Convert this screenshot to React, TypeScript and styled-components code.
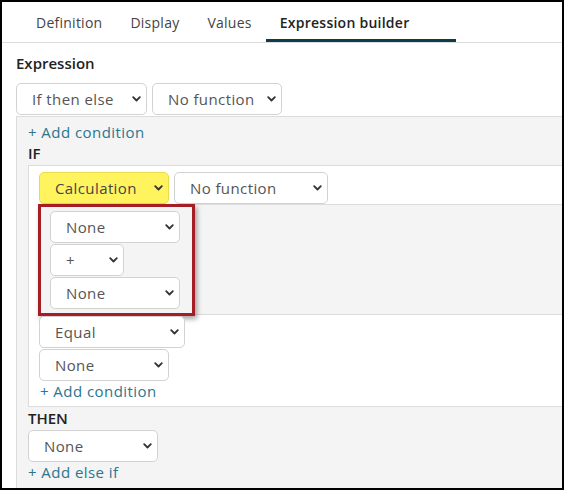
import React from 'react';
import styled, { createGlobalStyle, css } from 'styled-components';

const GlobalStyle = createGlobalStyle`
  *, *::before, *::after { box-sizing: border-box; }
  html, body { margin: 0; padding: 0; background: #fff; }
  body { font-family: "Open Sans", "Liberation Sans", sans-serif; color: #333; }
`;

const Frame = styled.div`
  width: 564px;
  height: 490px;
  border: 2px solid #000;
  overflow: hidden;
  background: #fff;
`;

const Tabs = styled.div`
  display: flex;
  height: 41px;
  padding-left: 20px;
  border-bottom: 1px solid #dcdcdc;
`;

const Tab = styled.div<{ $active?: boolean }>`
  display: flex;
  align-items: center;
  padding: 3px 14px 0;
  font-size: 14px;
  letter-spacing: 0.25px;
  color: #444;
  border-bottom: 3px solid transparent;
  ${(p) =>
    p.$active &&
    css`
      min-width: 190px;
      color: #222;
      font-weight: 600;
      border-bottom-color: #0b3d4f;
    `}
`;

const Body = styled.div`
  padding: 10px 0 0 14px;
`;

const Label = styled.div`
  font-size: 15px;
  font-weight: 600;
  line-height: 20px;
  color: #222;
`;

const Row = styled.div<{ $top?: number }>`
  display: flex;
  gap: 5px;
  margin-top: ${(p) => p.$top ?? 0}px;
`;

const Stack = styled.div<{ $top?: number }>`
  display: flex;
  flex-direction: column;
  align-items: flex-start;
  gap: 1px;
  margin-top: ${(p) => p.$top ?? 0}px;
`;

const Panel = styled.div<{ $tone: 'gray' | 'white' }>`
  border: 1px solid #dcdcdc;
  border-right: none;
  background: ${(p) => (p.$tone === 'gray' ? '#f4f4f4' : '#fff')};
`;

const ExprPanel = styled(Panel)`
  margin-top: 1px;
  padding: 5px 0 0 11px;
  height: 400px;
`;

const ConditionPanel = styled(Panel)`
  margin-top: 2px;
  padding: 6px 0 5px 10px;
`;

const CalcPanel = styled(Panel)`
  position: relative;
  padding: 6px 0 5px 10px;

  /* red highlight frame around the calculation operands */
  &::after {
    content: '';
    position: absolute;
    left: -2px;
    top: -1px;
    width: 157px;
    height: 112px;
    border: 3px solid #a51d25;
    box-shadow: 2px 3px 5px rgba(0, 0, 0, 0.35);
  }
`;

const Link = styled.div<{ $indent?: number }>`
  font-size: 15px;
  line-height: 20px;
  letter-spacing: 0.45px;
  color: #2a7690;
  padding-left: ${(p) => p.$indent ?? 0}px;
`;

const Keyword = styled.div<{ $top?: number }>`
  font-size: 15px;
  font-weight: 600;
  line-height: 20px;
  color: #222;
  margin-top: ${(p) => p.$top ?? 0}px;
`;

const SelectBox = styled.div<{ $w: number; $yellow?: boolean }>`
  position: relative;
  flex: none;
  width: ${(p) => p.$w}px;
  height: 32px;
  display: flex;
  align-items: center;
  padding-left: 15px;
  border: 1px solid ${(p) => (p.$yellow ? '#e8dc4a' : '#d2d2d2')};
  border-radius: 5px;
  background: ${(p) => (p.$yellow ? '#fff45e' : '#fff')};
  font-size: 15px;
  letter-spacing: 0.4px;
  color: ${(p) => (p.$yellow ? '#444' : '#555')};
  white-space: nowrap;
`;

const Chevron = styled.svg`
  position: absolute;
  right: 5px;
  top: 50%;
  margin-top: -3px;
  width: 9px;
  height: 6px;
`;

type SelectProps = { w: number; yellow?: boolean; children: React.ReactNode };

const Select = ({ w, yellow, children }: SelectProps) => (
  <SelectBox $w={w} $yellow={yellow}>
    {children}
    <Chevron viewBox="0 0 9 6">
      <path d="M1.2 1.2 L4.5 4.5 L7.8 1.2" fill="none" stroke="#333" strokeWidth="1.8" strokeLinecap="round" strokeLinejoin="round" />
    </Chevron>
  </SelectBox>
);

const App = () => {
  return (
    <>
      <GlobalStyle />
      <Frame>
        <Tabs>
          <Tab>Definition</Tab>
          <Tab>Display</Tab>
          <Tab>Values</Tab>
          <Tab $active>Expression builder</Tab>
        </Tabs>
        <Body>
          <Label>Expression</Label>
          <Row $top={10}>
            <Select w={131}>If then else</Select>
            <Select w={130}>No function</Select>
          </Row>
          <ExprPanel $tone="gray">
            <Link>+ Add condition</Link>
            <Keyword $top={1}>IF</Keyword>
            <ConditionPanel $tone="white">
              <Row>
                <Select w={130} yellow>Calculation</Select>
                <Select w={154}>No function</Select>
              </Row>
              <CalcPanel $tone="gray">
                <Stack>
                  <Select w={130}>None</Select>
                  <Select w={74}>+</Select>
                  <Select w={130}>None</Select>
                </Stack>
              </CalcPanel>
              <Stack $top={1}>
                <Select w={146}>Equal</Select>
                <Select w={130}>None</Select>
              </Stack>
              <Link $indent={1}>+ Add condition</Link>
            </ConditionPanel>
            <Keyword $top={1}>THEN</Keyword>
            <Stack $top={2}>
              <Select w={130}>None</Select>
            </Stack>
            <Link>+ Add else if</Link>
          </ExprPanel>
        </Body>
      </Frame>
    </>
  );
};

export default App;
